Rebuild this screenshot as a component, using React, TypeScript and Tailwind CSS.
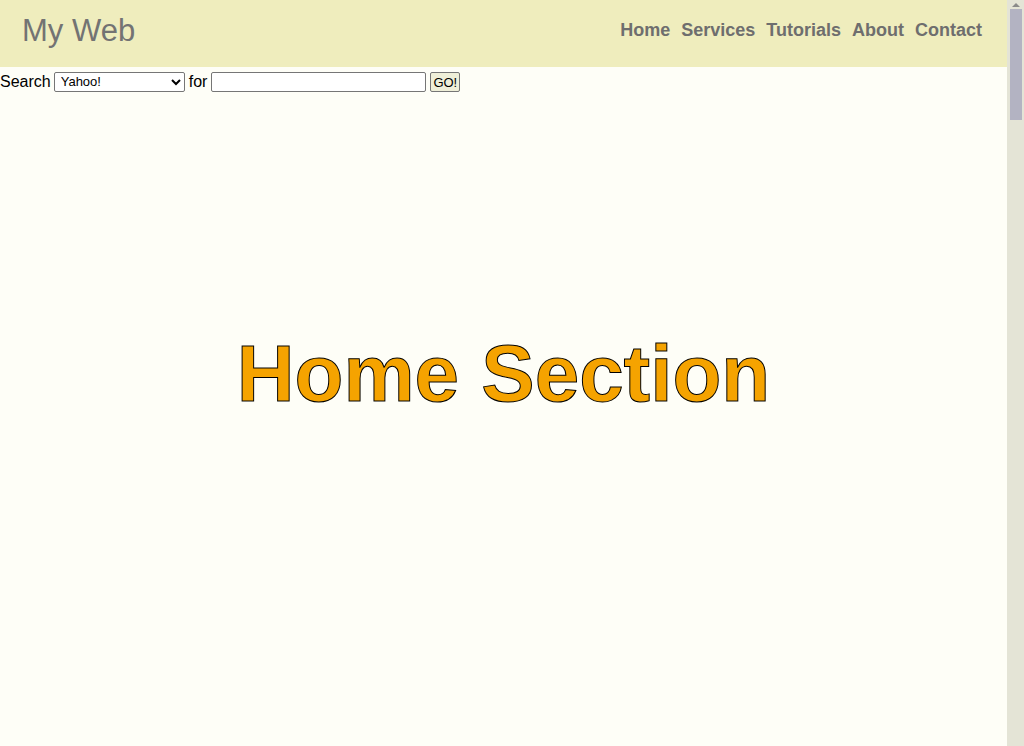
import { FC } from 'react'

const navItems = ['Home', 'Services', 'Tutorials', 'About', 'Contact']

const Scrollbar: FC = () => (
    <div className="flex flex-col items-center w-[17px] shrink-0 bg-[#e4e4d6]">
        <div className="flex items-center justify-center h-[9px] w-full">
            <svg width="8" height="5" viewBox="0 0 8 5">
                <path d="M0 5 L4 1 L8 5 Z" fill="#8a8a8a" />
            </svg>
        </div>
        <div className="w-[12px] h-[111px] bg-[#b3b3c2]" />
    </div>
)

const App: FC = () => {
    return (
        <div className="flex h-[746px] overflow-hidden bg-[#fefef7] font-['Liberation_Sans',Arial,sans-serif] text-black">
            <div className="flex flex-col flex-1 min-w-0">
                <header className="flex items-center justify-between h-[67px] bg-[#efedbd] pl-[22px] pr-[25px]">
                    <div className="text-[31px] leading-none text-[#737373] -mt-[6px]">My Web</div>
                    <nav className="flex gap-[11px] -mt-[8px]">
                        {navItems.map((item) => (
                            <a
                                key={item}
                                href="#"
                                className="text-[18px] font-bold text-[#6e6e6e] leading-none"
                            >
                                {item}
                            </a>
                        ))}
                    </nav>
                </header>
                <form className="flex items-center gap-[4px] h-[29px] text-[16px]">
                    <span className="-mr-[1px]">Search</span>
                    <select className="w-[131px] h-[20px] border border-[#767676] rounded-[2px] text-[13px] px-[2px] bg-white">
                        <option>Yahoo!</option>
                        <option>Google</option>
                        <option>Bing</option>
                    </select>
                    <span>for</span>
                    <input
                        type="text"
                        className="w-[215px] h-[20px] border border-[#767676] rounded-[2px] bg-white"
                    />
                    <button
                        type="button"
                        className="h-[20px] px-[2px] text-[13px] border border-[#767676] rounded-[2px] bg-[#efefd8]"
                    >
                        GO!
                    </button>
                </form>
                <section className="flex justify-center pt-[238px]">
                    <h1 className="text-[80px] font-bold leading-none text-[#f5a300] [-webkit-text-stroke:1px_#000]">
                        Home Section
                    </h1>
                </section>
            </div>
            <Scrollbar />
        </div>
    )
}

export default App
